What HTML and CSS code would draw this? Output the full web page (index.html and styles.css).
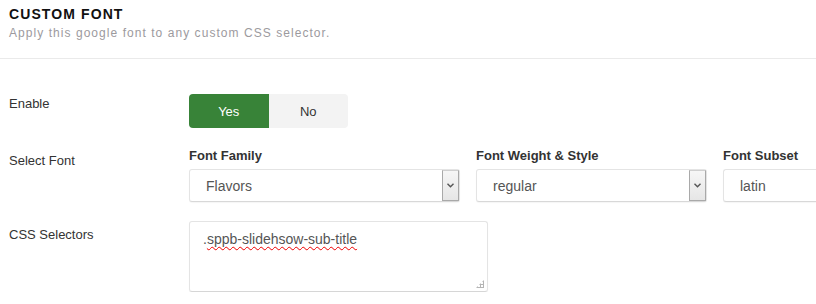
FILE: index.html
```html
<!DOCTYPE html>
<html lang="en">
<head>
  <meta charset="UTF-8" />
  <title>Custom Font</title>
  <link rel="stylesheet" href="styles.css">
</head>
<body>
  <div class="panel">
    <div class="panel-head">
      <h3>Custom Font</h3>
      <p>Apply this google font to any custom CSS selector.</p>
    </div>

    <div class="form">
      <div class="row">
        <label class="row-label flush">Enable</label>
        <div class="toggle">
          <span class="toggle-btn active">Yes</span>
          <span class="toggle-btn">No</span>
        </div>
      </div>

      <div class="row">
        <label class="row-label">Select Font</label>
        <div class="font-fields">
          <div class="field">
            <div class="field-title">Font Family</div>
            <div class="select">
              <span class="select-value">Flavors</span>
              <span class="select-arrow">
                <svg width="7" height="5" viewBox="0 0 7 5"><path d="M0.5 0.8 L3.5 3.8 L6.5 0.8" fill="none" stroke="#555" stroke-width="1.4"/></svg>
              </span>
            </div>
          </div>
          <div class="field">
            <div class="field-title">Font Weight &amp; Style</div>
            <div class="select">
              <span class="select-value">regular</span>
              <span class="select-arrow">
                <svg width="7" height="5" viewBox="0 0 7 5"><path d="M0.5 0.8 L3.5 3.8 L6.5 0.8" fill="none" stroke="#555" stroke-width="1.4"/></svg>
              </span>
            </div>
          </div>
          <div class="field">
            <div class="field-title">Font Subset</div>
            <div class="select cut">
              <span class="select-value">latin</span>
            </div>
          </div>
        </div>
      </div>

      <div class="row">
        <label class="row-label">CSS Selectors</label>
        <div class="textarea">
          .<span class="misspelled">sppb-slidehsow-sub-title</span>
          <span class="grip"></span>
        </div>
      </div>
    </div>
  </div>
</body>
</html>
```

FILE: styles.css
```css
* {
  margin: 0;
  padding: 0;
  box-sizing: border-box;
}

body {
  font-family: 'Liberation Sans', Arial, sans-serif;
  background: #fff;
  color: #333;
  overflow: hidden;
}

.panel-head {
  padding: 6px 9px 18px;
  border-bottom: 1px solid #eaeaea;
}

.panel-head h3 {
  font-size: 14px;
  line-height: 16px;
  font-weight: bold;
  text-transform: uppercase;
  letter-spacing: 1.1px;
  color: #111;
}

.panel-head p {
  margin-top: 4px;
  font-size: 12px;
  line-height: 14px;
  letter-spacing: 1.05px;
  color: #9c9a9e;
}

.form {
  padding: 35px 0 0 9px;
  display: flex;
  flex-direction: column;
  gap: 19px;
}

.row {
  display: grid;
  grid-template-columns: 180px 1fr;
}

.row-label {
  font-size: 13px;
  line-height: 18px;
  padding-top: 5px;
  color: #333;
}

.row-label.flush {
  padding-top: 1px;
}

.row-label.low {
  padding-top: 6px;
}

.toggle {
  display: flex;
  width: 159px;
  height: 34px;
  border-radius: 4px;
  overflow: hidden;
}

.toggle-btn {
  flex: 1;
  display: flex;
  align-items: center;
  justify-content: center;
  font-size: 13px;
  background: #f3f3f3;
  color: #333;
}

.toggle-btn.active {
  background: #388338;
  color: #fff;
}

.font-fields {
  display: grid;
  grid-template-columns: 271px 231px 1fr;
  column-gap: 16px;
}

.field-title {
  font-size: 13px;
  line-height: 18px;
  font-weight: bold;
  color: #333;
  margin-bottom: 4px;
}

.select {
  display: flex;
  align-items: center;
  height: 33px;
  border: 1px solid #e4e4e4;
  border-bottom-color: #d8d8d8;
  border-radius: 3px;
  box-shadow: 0 1px 1px rgba(0, 0, 0, 0.04);
  background: #fff;
}

.select.cut {
  border-right: none;
  border-top-right-radius: 0;
  border-bottom-right-radius: 0;
}

.select-value {
  flex: 1;
  padding-left: 16px;
  font-size: 14px;
  color: #555;
}

.select-arrow {
  align-self: stretch;
  width: 17px;
  display: flex;
  align-items: center;
  justify-content: center;
  border: 1px solid #a9a9a9;
  border-top-color: #cfcfcf;
  background: linear-gradient(#f6f6f6, #e6e6e6);
}

.textarea {
  position: relative;
  width: 299px;
  height: 71px;
  padding: 8px 13px;
  font-size: 14px;
  line-height: 18px;
  color: #555;
  border: 1px solid #e4e4e4;
  border-bottom-color: #d6d6d6;
  border-radius: 3px;
  box-shadow: 0 1px 1px rgba(0, 0, 0, 0.05);
  white-space: nowrap;
}

.misspelled {
  text-decoration: underline wavy #e00;
  text-decoration-skip-ink: none;
  text-decoration-thickness: 1px;
  text-underline-offset: 2px;
}

.grip {
  position: absolute;
  right: 3px;
  bottom: 3px;
  width: 8px;
  height: 8px;
  background:
    radial-gradient(circle, #b5b5b5 1px, transparent 1.2px) 0 0 / 3px 3px;
  clip-path: polygon(100% 0, 100% 100%, 0 100%);
}
```
